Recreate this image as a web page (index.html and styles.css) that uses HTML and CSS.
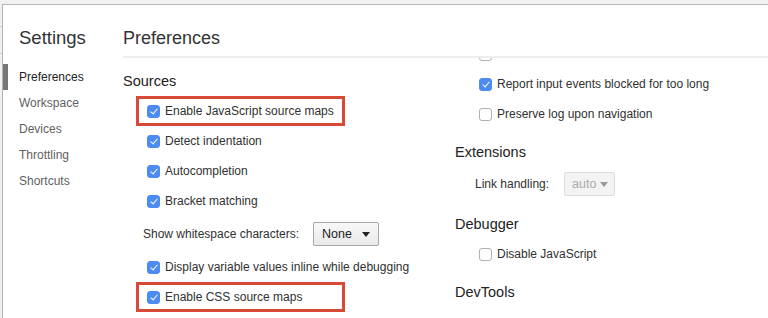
FILE: index.html
```html
<!DOCTYPE html>
<html lang="en">
<head>
    <meta charset="UTF-8">
    <title>Settings</title>
    <link rel="stylesheet" href="styles.css">
</head>
<body>
    <div class="dialog">
        <div class="sidebar">
            <div class="sidebarTitle">Settings</div>
            <ul class="tabs">
                <li class="active">Preferences</li>
                <li>Workspace</li>
                <li>Devices</li>
                <li>Throttling</li>
                <li>Shortcuts</li>
            </ul>
        </div>
        <div class="main">
            <div class="header">Preferences</div>
            <div class="content">
                <div class="column">
                    <div class="section">Sources</div>
                    <div class="row mark"><span class="box checked"></span>Enable JavaScript source maps</div>
                    <div class="row"><span class="box checked"></span>Detect indentation</div>
                    <div class="row"><span class="box checked"></span>Autocompletion</div>
                    <div class="row"><span class="box checked"></span>Bracket matching</div>
                    <div class="row field">Show whitespace characters:<span class="select">None<i class="arrow"></i></span></div>
                    <div class="row"><span class="box checked"></span>Display variable values inline while debugging</div>
                    <div class="row mark"><span class="box checked"></span>Enable CSS source maps</div>
                </div>
                <div class="column right">
                    <div class="row"><span class="box"></span>Enable custom formatters</div>
                    <div class="row"><span class="box checked"></span>Report input events blocked for too long</div>
                    <div class="row"><span class="box"></span>Preserve log upon navigation</div>
                    <div class="section">Extensions</div>
                    <div class="row field">Link handling:<span class="select disabled">auto<i class="arrow"></i></span></div>
                    <div class="section">Debugger</div>
                    <div class="row"><span class="box"></span>Disable JavaScript</div>
                    <div class="section">DevTools</div>
                </div>
            </div>
        </div>
    </div>
</body>
</html>
```

FILE: styles.css
```css
*{
    padding: 0px;
    margin: 0px;
    list-style: none;
    box-sizing: border-box;
}
html, body{
    height: 100%;
    overflow: hidden;
}
body{
    padding: 4px 0px 0px 2px;
    background: #f1f1f1;
    background-image: linear-gradient(#c9c9c9, #c9c9c9), linear-gradient(#c9c9c9, #c9c9c9);
    background-size: 2px 1px, 2px 1px;
    background-position: 0px 26px, 0px 53px;
    background-repeat: no-repeat;
    font-family: "Liberation Sans", Arial, sans-serif;
    font-size: 12px;
    color: #333;
}
.dialog{
    display: flex;
    height: 100%;
    background: #fff;
    border-top: 1px solid #b4b4b4;
    border-left: 1px solid #b4b4b4;
}
.sidebar{
    width: 120px;
    flex-shrink: 0;
}
.sidebarTitle{
    padding: 22px 0px 0px 16px;
    height: 59px;
    font-size: 18.5px;
    line-height: 22px;
    color: #333;
}
.tabs li{
    height: 26px;
    line-height: 26px;
    font-size: 12px;
    color: #5f5f5f;
    border-left: 5px solid transparent;
    padding-left: 11px;
}
.tabs .active{
    color: #222;
    border-left-color: #777;
}
.main{
    flex: 1;
    display: flex;
    flex-direction: column;
    min-width: 0px;
}
.header{
    height: 53px;
    padding-top: 22px;
    font-size: 18px;
    line-height: 22px;
    color: #333;
    border-bottom: 2px solid #eeeeee;
}
.content{
    flex: 1;
    display: flex;
    overflow: hidden;
}
.column{
    width: 332px;
    flex-shrink: 0;
}
.column.right{
    margin-top: -19px;
}
.section{
    margin: 13px 0px 5px;
    font-size: 14.5px;
    line-height: 20px;
    color: #222;
}
.row{
    display: flex;
    align-items: center;
    height: 30px;
    padding-left: 24px;
    white-space: nowrap;
    color: #303030;
}
.row.mark{
    width: 209px;
    margin-left: 13px;
    padding-left: 8px;
    border: 3px solid #d84a38;
}
.row.field{
    height: 36px;
    padding-left: 20px;
}
.column.right .row.field{
    height: 34px;
}
.box{
    flex-shrink: 0;
    width: 13px;
    height: 13px;
    margin-right: 5px;
    border: 1px solid #b0b0b0;
    border-radius: 3px;
    background: #fff;
    position: relative;
}
.box.checked{
    border-color: #4b8bf2;
    background: #4b8bf2;
}
.box.checked::after{
    content: "";
    position: absolute;
    left: 3.5px;
    top: 1.5px;
    width: 3px;
    height: 6px;
    border-right: 1.6px solid #fff;
    border-bottom: 1.6px solid #fff;
    transform: rotate(40deg);
}
.select{
    display: inline-flex;
    align-items: center;
    justify-content: space-between;
    flex-shrink: 0;
    width: 66px;
    height: 24px;
    margin-left: 14px;
    padding: 0px 8px 0px 8px;
    border: 1px solid #a6a6a6;
    border-radius: 2px;
    background: linear-gradient(#f8f8f8, #e9e9e9);
    color: #222;
    font-size: 12.5px;
}
.select.disabled{
    width: 51px;
    margin-left: 15px;
    padding: 0px 6px 0px 7px;
    border-color: #dcdcdc;
    background: #f3f3f3;
    color: #aaa;
}
.arrow{
    width: 0px;
    height: 0px;
    border-left: 4.5px solid transparent;
    border-right: 4.5px solid transparent;
    border-top: 5px solid #222;
}
.select.disabled .arrow{
    border-top-color: #9a9a9a;
}
```
